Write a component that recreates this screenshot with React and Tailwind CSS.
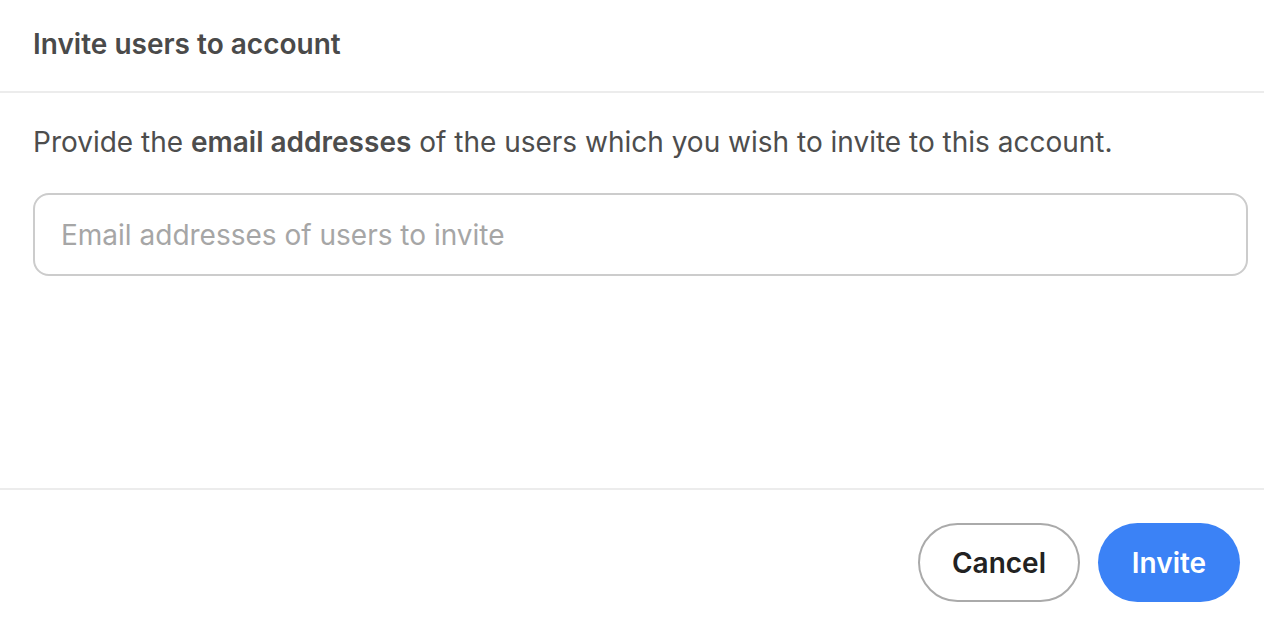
import React from "react";

const App = () => {
  return (
    <div className="w-[1264px] h-[624px] bg-white flex flex-col font-['Inter',sans-serif] overflow-hidden">
      {/* Header */}
      <div className="h-[93px] flex items-center px-[33px] pb-[4px] border-b-2 border-[#ececec] shrink-0">
        <h3 className="text-[28px] font-semibold text-[#4a4a4a]">
          Invite users to account
        </h3>
      </div>

      {/* Body */}
      <div className="flex-1 px-[33px] pt-[30px]">
        <p className="text-[28px] text-[#4d4d4d] leading-[38px]">
          Provide the <span className="font-semibold">email addresses</span> of
          the users which you wish to invite to this account.
        </p>
        <input
          type="text"
          placeholder="Email addresses of users to invite"
          className="mt-[32px] w-[1215px] h-[83px] rounded-[16px] border-2 border-[#cccccc] px-[26px] text-[28px] text-[#333] placeholder:text-[#a6a6a6] outline-none"
        />
      </div>

      {/* Footer */}
      <div className="h-[136px] border-t-2 border-[#ececec] flex justify-end items-start gap-[18px] pr-[24px] pt-[33px] shrink-0">
        <button className="w-[162px] h-[79px] rounded-full border-2 border-[#aaaaaa] bg-white text-[28px] font-semibold text-[#222]">
          Cancel
        </button>
        <button className="w-[142px] h-[79px] rounded-full bg-[#3b82f6] text-[28px] font-semibold text-white">
          Invite
        </button>
      </div>
    </div>
  );
};

export default App;
